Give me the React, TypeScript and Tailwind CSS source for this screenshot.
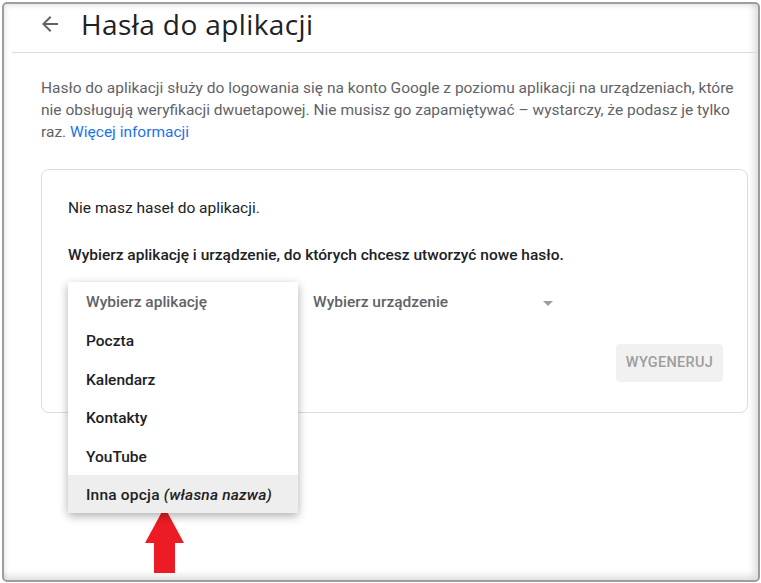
import React from "react";

export default function App() {
  const items = [
    { label: "Poczta", h: "h-[39px]" },
    { label: "Kalendarz", h: "h-[39px]" },
    { label: "Kontakty", h: "h-[38px]" },
    { label: "YouTube", h: "h-[39px]" },
  ];
  return (
    <div
      className="relative w-[761px] h-[583px] bg-white overflow-hidden"
      style={{ fontFamily: "Roboto, 'Noto Sans', Arial, sans-serif" }}
    >
      <div className="absolute left-[2px] top-[2px] w-[758px] h-[580px] rounded-[5px] border-2 border-[#9d9d9d] bg-white shadow-[inset_-4px_-4px_7px_rgba(0,0,0,0.13),inset_2px_3px_4px_rgba(0,0,0,0.07)] overflow-hidden">
        {/* header */}
        <div className="ml-[8px] h-[49px] pb-[8px] flex items-center border-b border-[#dadce0]">
          <svg
            className="ml-[26px] w-[24px] h-[24px]"
            viewBox="0 0 24 24"
            fill="#5f6368"
          >
            <path d="M20 11H7.83l5.59-5.59L12 4l-8 8 8 8 1.41-1.41L7.83 13H20v-2z" />
          </svg>
          <h1
            className="ml-[19px] text-[28px] leading-[36px] text-[#202124] font-normal tracking-[0.4px]"
            style={{ fontFamily: "'Open Sans', Roboto, sans-serif" }}
          >
            Hasła do aplikacji
          </h1>
        </div>

        <div className="ml-[37px] w-[707px]">
          <p className="mt-[24px] text-[15.5px] leading-[22px] text-[#5f6368]">
            Hasło do aplikacji służy do logowania się na konto Google z poziomu
            aplikacji na urządzeniach, które nie obsługują weryfikacji
            dwuetapowej. Nie musisz go zapamiętywać – wystarczy, że podasz je
            tylko raz.{" "}
            <span className="text-[#1a73e8]">Więcej informacji</span>
          </p>

          <div className="relative mt-[26px] h-[244px] rounded-[8px] border border-[#dadce0] pl-[26px] pr-[24px] pt-[27px]">
            <div className="text-[15.5px] leading-[22px] text-[#202124]">
              Nie masz haseł do aplikacji.
            </div>
            <div className="mt-[25px] text-[15.5px] leading-[22px] text-[#202124] font-medium">
              Wybierz aplikację i urządzenie, do których chcesz utworzyć nowe
              hasło.
            </div>

            <div className="mt-[18px] h-[38px] flex items-center">
              <div className="w-[245px]" />
              <div className="w-[246px] flex items-center justify-between text-[15.5px] font-medium text-[#5f6368]">
                <span>Wybierz urządzenie</span>
                <span className="w-0 h-0 border-l-[5.5px] border-r-[5.5px] border-t-[5px] border-l-transparent border-r-transparent border-t-[#9e9e9e] mr-[6px]" />
              </div>
            </div>

            <div className="mt-[22px] flex justify-end">
              <div className="w-[107px] h-[38px] rounded-[4px] bg-[#f1f1f1] flex items-center justify-center text-[14.5px] font-medium text-[#9e9e9e] tracking-[0.3px]">
                WYGENERUJ
              </div>
            </div>

            {/* dropdown menu */}
            <div className="absolute left-[26px] top-[112px] w-[230px] bg-white shadow-[0_3px_9px_rgba(0,0,0,0.32)] z-10">
              <div className="h-[38px] pl-[18px] pt-[3px] flex items-center text-[15.5px] font-medium text-[#5f6368]">
                Wybierz aplikację
              </div>
              {items.map((it) => (
                <div
                  key={it.label}
                  className={`${it.h} pl-[18px] pt-[4px] flex items-center text-[15.5px] font-medium text-[#202124]`}
                >
                  {it.label}
                </div>
              ))}
              <div className="h-[38px] pl-[18px] pt-[3px] flex items-center text-[15.5px] font-medium text-[#202124] bg-[#eeeeee] tracking-[0.2px]">
                Inna opcja&nbsp;<i>(własna nazwa)</i>
              </div>
            </div>
          </div>
        </div>
      </div>

      {/* red arrow */}
      <svg
        className="absolute left-[145px] top-[507px] w-[40px] h-[67px]"
        viewBox="0 0 40 67"
      >
        <polygon
          points="19.5,0 39,36 30,36 30,66 9,66 9,36 0,36"
          fill="#ed1c24"
        />
      </svg>
    </div>
  );
}
